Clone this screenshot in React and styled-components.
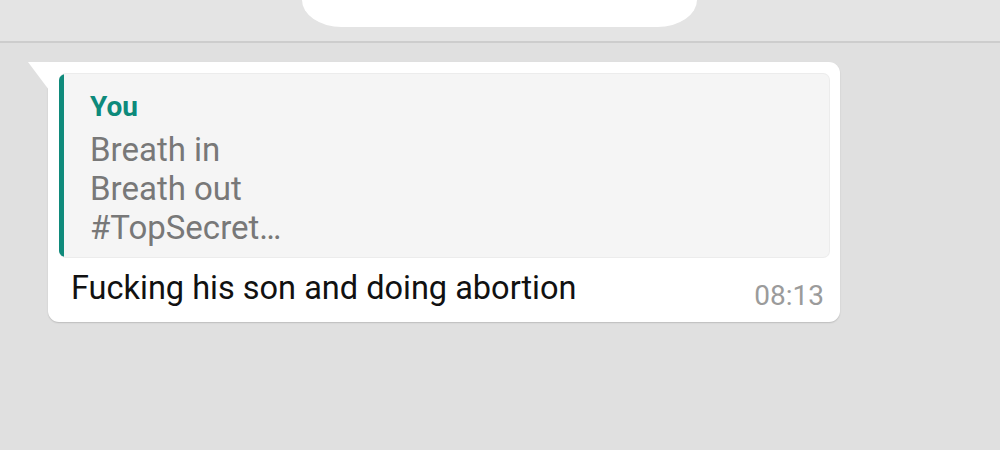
import React from "react";
import styled, { createGlobalStyle } from "styled-components";

const Global = createGlobalStyle`
  html, body { margin: 0; padding: 0; }
  body {
    width: 1000px;
    height: 450px;
    overflow: hidden;
    background: #e0e0e0;
    font-family: Roboto, "Noto Sans", "Liberation Sans", sans-serif;
  }
`;

const Page = styled.div`
  width: 1000px;
  height: 450px;
  display: flex;
  flex-direction: column;
  background: #e0e0e0;
`;

const Header = styled.div`
  height: 41px;
  flex-shrink: 0;
  background: #e4e4e4;
  border-bottom: 2px solid #cdcdcd;
  display: flex;
  justify-content: center;
  align-items: flex-start;
`;

const Pill = styled.div`
  width: 395px;
  height: 27px;
  margin-left: -1px;
  background: #ffffff;
  border-bottom-left-radius: 44px 30px;
  border-bottom-right-radius: 44px 30px;
`;

const Chat = styled.div`
  flex: 1;
  padding: 19px 0 0 48px;
`;

const Bubble = styled.div`
  position: relative;
  width: 792px;
  box-sizing: border-box;
  background: #ffffff;
  border-radius: 0 11px 11px 11px;
  padding: 11px 10px 10px 11px;
  box-shadow: 0 1px 1.5px rgba(0, 0, 0, 0.16);
`;

const Tail = styled.div`
  position: absolute;
  top: 0;
  left: -20px;
  width: 21px;
  height: 28px;
  background: #ffffff;
  clip-path: polygon(0 0, 100% 0, 100% 100%);
`;

const Quote = styled.div`
  display: flex;
  background: #f5f5f5;
  border: 1px solid #ececec;
  border-left: none;
  border-radius: 7px;
  overflow: hidden;
`;

const QuoteBar = styled.div`
  width: 5px;
  flex-shrink: 0;
  background: #0f8a7b;
`;

const QuoteBody = styled.div`
  flex: 1;
  padding: 16px 20px 10px 26px;
`;

const Author = styled.div`
  color: #0d8a7b;
  font-weight: 700;
  font-size: 28px;
  line-height: 34px;
  margin-bottom: 6px;
`;

const QuoteLine = styled.div`
  color: #787878;
  font-size: 33px;
  line-height: 39px;
  white-space: nowrap;
`;

const Footer = styled.div`
  display: flex;
  align-items: flex-start;
  justify-content: space-between;
  margin-top: 10px;
  padding: 0 6px 0 12px;
`;

const Message = styled.div`
  color: #111111;
  font-size: 32.5px;
  line-height: 40px;
`;

const Time = styled.div`
  color: #9b9b9b;
  font-size: 28px;
  line-height: 32px;
  margin-top: 12px;
`;

export default function App() {
  return (
    <Page>
      <Global />
      <Header>
        <Pill />
      </Header>
      <Chat>
        <Bubble>
          <Tail />
          <Quote>
            <QuoteBar />
            <QuoteBody>
              <Author>You</Author>
              <QuoteLine>Breath in</QuoteLine>
              <QuoteLine>Breath out</QuoteLine>
              <QuoteLine>#TopSecret…</QuoteLine>
            </QuoteBody>
          </Quote>
          <Footer>
            <Message>Fucking his son and doing abortion</Message>
            <Time>08:13</Time>
          </Footer>
        </Bubble>
      </Chat>
    </Page>
  );
}
